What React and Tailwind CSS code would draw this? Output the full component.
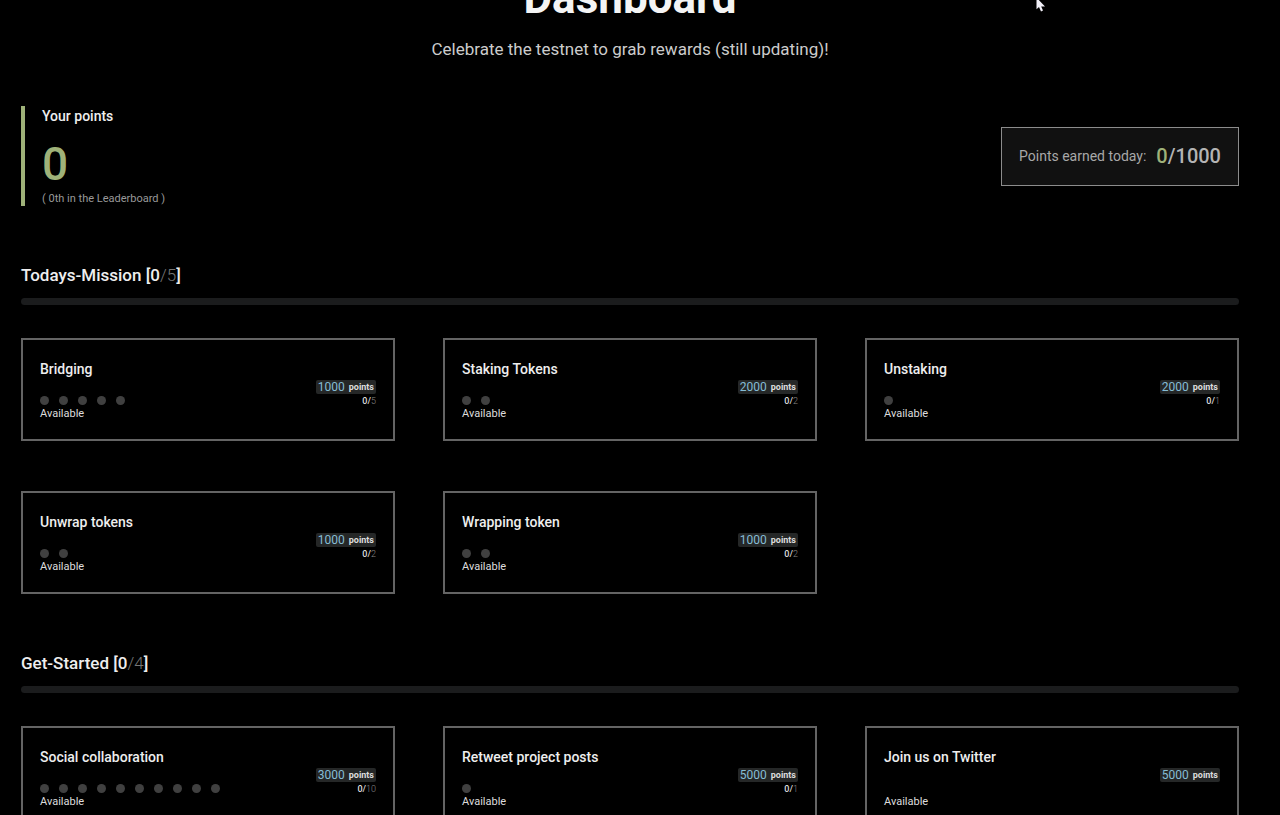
const sections = [
    {
        name: "Todays-Mission",
        done: 0,
        total: 5,
        missions: [
            { title: "Bridging", points: 1000, total: 5 },
            { title: "Staking Tokens", points: 2000, total: 2 },
            { title: "Unstaking", points: 2000, total: 1 },
            { title: "Unwrap tokens", points: 1000, total: 2 },
            { title: "Wrapping token", points: 1000, total: 2 }
        ]
    },
    {
        name: "Get-Started",
        done: 0,
        total: 4,
        missions: [
            { title: "Social collaboration", points: 3000, total: 10 },
            { title: "Retweet project posts", points: 5000, total: 1 },
            { title: "Join us on Twitter", points: 5000, total: 0 }
        ]
    }
];

function MissionCard({ mission }) {
    return (
        <article className="flex justify-between border-2 border-[#646464] px-[17px] pt-[19px] pb-4">
            <div>
                <h3 className="text-[14px] leading-5 font-medium text-[#eeeeee]">{mission.title}</h3>
                <div className="mt-[17px] flex h-[9px] gap-[10px]">
                    {Array.from({ length: mission.total }, (_, i) => (
                        <span key={i} className="size-[9px] rounded-full bg-[#404040]" />
                    ))}
                </div>
                <p className="text-[11px] leading-[18px] text-[#dddddd]">Available</p>
            </div>
            <div className="mt-[21px] flex flex-col items-end">
                <p className="flex h-[14px] items-center gap-1 rounded-xs bg-[#252727] px-[2px] leading-[14px]">
                    <span className="text-[12px] text-[#86bdd5]">{mission.points}</span>
                    <span className="text-[9px] font-bold text-[#dddddd]">points</span>
                </p>
                {mission.total > 0 && (
                    <p className="text-[9px] leading-[14px] font-medium text-[#dddddd]">
                        0/<span className="font-light text-[#888888]">{mission.total}</span>
                    </p>
                )}
            </div>
        </article>
    );
}

function Section({ section }) {
    return (
        <section className="mt-[57px]">
            <h2 className="text-[17px] leading-6 font-medium text-[#eeeeee]">
                {section.name} [{section.done}
                <span className="font-light text-[#777777]">/{section.total}</span>]
            </h2>
            <div className="mt-[11px] h-[7px] rounded-full bg-[#1b1c1d]" />
            <div className="mt-[33px] grid grid-cols-3 gap-x-12 gap-y-[50px]">
                {section.missions.map((mission) => (
                    <MissionCard key={mission.title} mission={mission} />
                ))}
            </div>
        </section>
    );
}

export default function App() {
    return (
        <div className="relative h-screen overflow-hidden bg-black font-['Roboto',sans-serif]">
            <main className="pr-[41px] pl-[21px]">
                {/* Header */}
                <header className="-mt-[30px] text-center">
                    <h1 className="text-[44px] leading-[56px] font-bold text-[#f4f4f4]">Dashboard</h1>
                    <p className="mt-[11px] text-[17px] leading-6 text-[#cccccc]">
                        Celebrate the testnet to grab rewards (still updating)!
                    </p>
                </header>

                {/* Points */}
                <div className="mt-[45px] flex items-center justify-between">
                    <div className="border-l-4 border-[#9fb279] pl-[17px]">
                        <h2 className="text-[14px] leading-5 font-medium text-[#eeeeee]">Your points</h2>
                        <p className="mt-[14px] text-[46px] leading-[48px] font-medium text-[#9fb279]">0</p>
                        <p className="mt-1 text-[11px] leading-[14px] text-[#999999]">( 0th in the Leaderboard )</p>
                    </div>
                    <div className="flex h-[59px] items-center gap-[10px] border border-[#8c8c8c] bg-[#111111] px-[17px]">
                        <span className="text-[14px] text-[#a8a8a8]">Points earned today:</span>
                        <span className="text-[20px] font-medium text-[#b4b4b4]">
                            <span className="text-[#9fb279]">0</span>/1000
                        </span>
                    </div>
                </div>

                {sections.map((section) => (
                    <Section key={section.name} section={section} />
                ))}
            </main>

            {/* Pointer */}
            <svg className="absolute top-0 left-[1036px]" width="10" height="12" viewBox="0 0 10 12" fill="#f2f0f8">
                <path d="M0.5 0V9.2L3 7L5 11.5L7 10.6L5.2 6.5H9L2.8 0Z" />
            </svg>
        </div>
    );
}
